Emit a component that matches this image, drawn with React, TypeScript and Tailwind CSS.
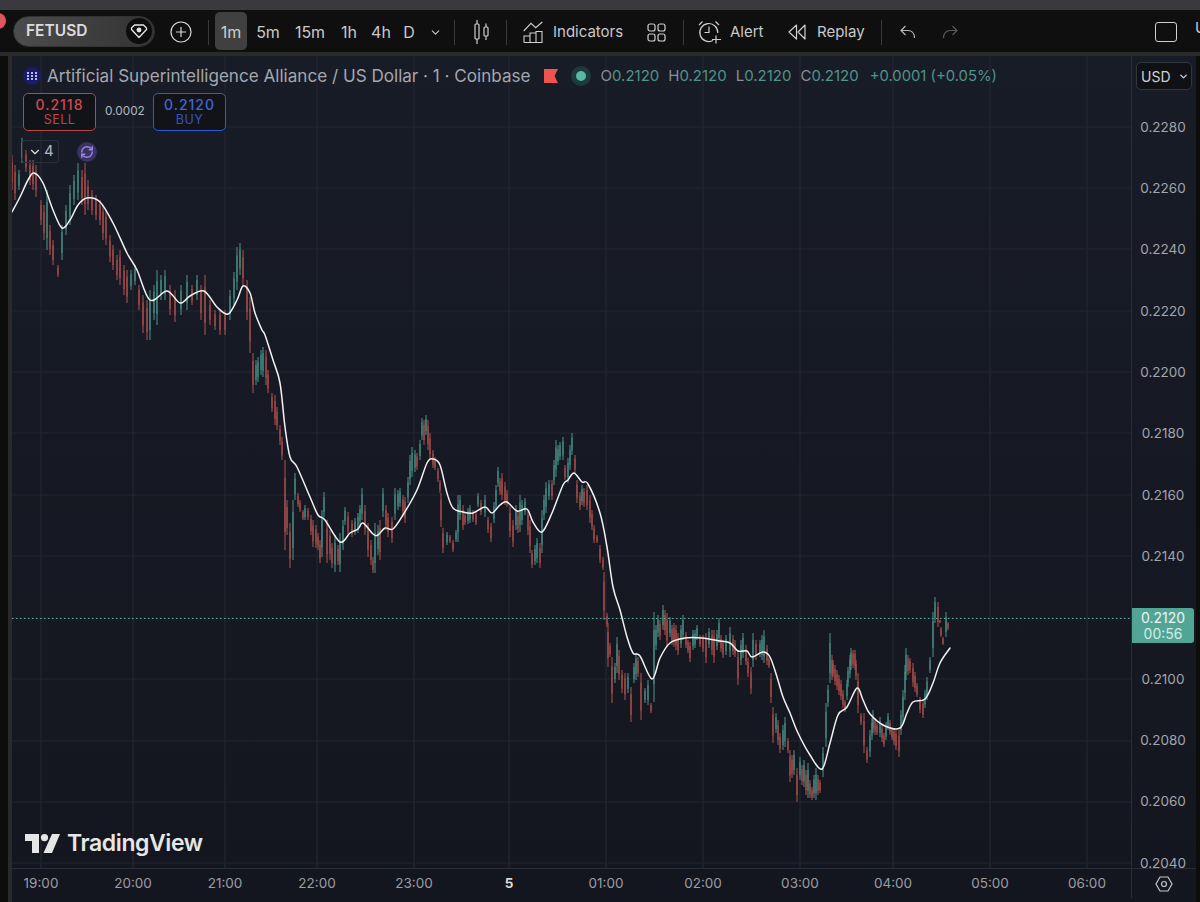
import React from 'react';
import { ChevronDown, RefreshCw } from 'lucide-react';

// traced by hand from the chart: [x, high, low] in page pixels
const CANDLES: number[][] = [
  [12,155,190],[15,165,200],[19,170,190],[22,138,163],[26,150,172],[30,160,185],[33,160,190],[36,165,197],[41,200,225],[44,205,240],[47,190,250],[50,225,255],[53,240,265],[58,265,277],
  [62,225,260],[66,205,235],[70,185,225],[74,175,205],[78,163,200],[82,170,205],[85,163,215],[88,180,210],[92,190,215],[96,195,220],[100,200,225],[103,205,240],[106,210,245],[110,235,262],[113,245,270],
  [117,255,280],[120,250,285],[124,265,295],[127,270,303],[131,270,290],[135,265,285],[139,285,310],[143,295,333],[147,300,340],[150,290,340],[154,285,320],[157,270,325],[161,275,300],[165,270,300],[170,285,315],[175,290,322],
  [181,285,315],[187,275,310],[192,285,305],[197,275,300],[201,285,320],[205,275,335],[210,300,325],[215,310,330],[220,310,335],[225,310,335],[230,290,320],[234,272,305],
  [237,247,290],[240,243,275],[243,250,285],[247,280,320],[250,297,353],[253,353,393],[256,360,385],[258,357,382],[261,350,375],[263,347,377],[266,350,385],[268,370,393],[272,393,412],[275,395,425],[277,407,430],[280,425,445],[282,437,460],[285,460,550],[287,500,535],[290,523,568],[293,500,560],[295,473,500],[298,493,507],[300,500,512],
  [303,510,520],[305,505,520],[308,508,520],[311,515,535],[313,520,547],[316,525,548],[318,533,550],[320,540,563],[322,510,557],[324,492,517],[327,520,563],[330,530,560],[332,543,568],[335,535,572],[338,545,565],[340,533,572],[343,520,550],[345,507,525],[348,512,535],[352,520,537],[355,518,535],[358,513,533],[360,505,525],[362,488,520],[365,505,535],[368,523,557],[371,540,565],[373,557,573],[375,523,573],[378,525,555],[380,520,560],[383,488,517],[386,505,530],[388,513,537],[392,517,543],[395,488,520],[398,490,510],[400,488,507],[403,495,515],[405,497,523],[408,477,503],[410,455,485],[412,447,477],[415,450,472],[417,453,470],[420,440,460],[422,418,440],[424,420,445],[426,415,435],[428,420,450],[430,433,460],[433,450,468],[435,457,470],[438,468,482],[440,480,493],[441,493,527],[443,528,553],
  [447,532,545],[450,535,543],[453,540,552],[456,530,542],[458,495,542],[460,495,520],[463,505,530],[465,513,525],[468,508,524],[470,505,523],[473,510,522],[476,512,525],[478,493,507],[481,500,515],[485,495,517],[488,517,533],[491,523,542],[494,502,523],[496,485,510],[498,467,487],[500,478,495],[502,473,500],[505,482,505],[507,490,507],[510,507,537],[513,520,547],[516,505,530],[518,512,533],[520,495,532],[522,500,525],[525,498,515],[528,510,535],[530,520,553],[532,550,568],[535,545,565],[537,538,563],[540,543,568],[542,510,553],[544,495,520],[546,482,513],[549,480,500],[552,480,500],[554,460,485],[556,440,477],[558,445,465],[560,442,460],[563,437,460],[565,465,480],[568,458,483],[570,445,470],[572,433,455],[575,455,473],[577,480,503],[580,492,510],[582,485,505],[584,488,507],[587,485,510],[590,495,523],[592,510,530],[594,525,543],[597,535,543],[600,545,563],[603,557,570],[604,572,620],[607,613,627],[608,623,667],[610,643,657],[612,657,703],[615,663,683],[617,637,673],[619,650,680],[622,670,693],[625,673,700],[628,673,693],[631,687,722],[634,663,683],[636,653,680],[638,657,677],[641,673,720],[645,688,703],[648,680,705],[651,703,713],
  [654,612,702],[656,625,650],[658,615,637],[660,620,640],[663,605,630],[665,610,635],[667,613,647],[670,617,637],[672,625,645],[674,623,647],[676,625,650],[678,633,655],[681,625,648],[683,615,640],[686,632,648],[688,640,653],[690,642,662],[693,630,650],[695,630,648],[697,625,640],[700,635,647],[703,635,652],[706,633,663],[709,628,648],[712,630,655],[714,630,663],[717,630,650],[719,618,643],[721,635,652],[723,640,658],[726,635,655],[730,627,657],[733,635,655],[735,640,657],[738,650,685],[741,640,665],[743,633,658],[746,645,665],[748,658,677],[751,667,694],[753,633,667],[756,640,660],[760,640,657],[762,635,660],[764,630,663],[767,645,665],[769,657,668],[771,673,703],[773,707,743],[776,713,733],[778,720,745],[780,733,753],[783,725,750],[785,717,747],[788,738,753],[790,750,782],[792,755,778],[794,750,775],[797,768,802],[800,757,780],[802,765,785],[804,760,787],[806,770,795],[808,763,798],[810,780,798],[812,787,800],[814,775,798],[816,768,800],[818,775,795],[820,780,793],[823,747,777],[826,703,747],[828,685,707],[830,633,683],[832,655,680],[833,660,677],[835,665,685],[837,670,690],[839,675,695],[841,680,700],[843,690,708],[845,700,712],[847,680,700],[848,667,687],[850,655,678],[851,648,670],[853,650,668],[855,650,670],[856,660,680],[858,673,713],[861,713,725],[864,713,753],[867,747,763],[870,730,757],[872,718,740],[873,710,733],[875,718,735],[877,723,735],[880,717,737],[882,725,742],[884,733,747],[886,722,740],[888,713,730],[890,720,735],[892,727,740],[894,728,745],[896,730,750],[899,730,757],[901,710,735],[903,690,723],[905,665,700],[906,648,680],[908,655,675],[910,658,673],[913,663,687],[915,672,692],[917,683,697],[920,697,713],[923,700,718],[925,690,708],[927,677,700],[930,657,673],[933,612,657],[935,597,623],[938,602,627],[940,620,623],[941,627,637],[943,637,645],[946,612,637],[948,622,630],
];

// white moving average line
const MA = [
  [12,212],[20,197],[28,180],[34,173],[43,183],[53,210],[62,228],[70,220],[78,205],[87,198],[100,202],[113,223],[127,253],[137,270],[150,300],[167,291],[180,303],[190,296],[204,291],[217,307],[228,314],[237,300],[243,286],[250,293],[255,313],[262,330],[265,335],[273,360],[280,383],[285,427],[290,457],[297,467],[310,497],[318,515],[325,520],[340,542],[350,533],[358,529],[363,523],[373,534],[378,535],[385,528],[393,529],[403,515],[417,490],[427,463],[433,459],[440,465],[447,493],[453,508],[463,512],[473,513],[485,507],[492,513],[500,505],[507,502],[517,511],[527,509],[533,522],[542,532],[552,513],[563,485],[568,480],[574,473],[582,482],[588,484],[600,513],[607,547],[613,587],[620,610],[627,637],[633,653],[640,656],[652,679],[660,658],[670,643],[685,638],[702,638],[720,641],[730,643],[738,651],[747,651],[752,657],[763,652],[770,657],[777,677],[783,697],[790,713],[798,733],[810,755],[822,769],[830,743],[838,715],[847,707],[857,688],[863,700],[870,714],[885,726],[900,728],[907,713],[913,702],[925,699],[933,683],[940,663],[950,648],
];

// catmull-rom through the traced points so the line doesn't look angular
function smoothPath(pts: number[][]) {
  let d = `M${pts[0][0]} ${pts[0][1]}`;
  for (let i = 0; i < pts.length - 1; i++) {
    const p0 = pts[Math.max(i - 1, 0)];
    const p1 = pts[i];
    const p2 = pts[i + 1];
    const p3 = pts[Math.min(i + 2, pts.length - 1)];
    const c1x = p1[0] + (p2[0] - p0[0]) / 6;
    const c1y = p1[1] + (p2[1] - p0[1]) / 6;
    const c2x = p2[0] - (p3[0] - p1[0]) / 6;
    const c2y = p2[1] - (p3[1] - p1[1]) / 6;
    d += ` C${c1x} ${c1y} ${c2x} ${c2y} ${p2[0]} ${p2[1]}`;
  }
  return d;
}

const GRID_X = [41, 133, 225, 317, 414, 509, 606, 703, 800, 893, 990, 1087];
const GRID_Y = [127, 188, 249, 311, 372, 433, 495, 556, 618, 679, 741, 802, 863];

const TICKS = [
  { x: 41, label: '19:00' },
  { x: 133, label: '20:00' },
  { x: 225, label: '21:00' },
  { x: 317, label: '22:00' },
  { x: 414, label: '23:00' },
  { x: 509, label: '5', bold: true },
  { x: 606, label: '01:00' },
  { x: 703, label: '02:00' },
  { x: 800, label: '03:00' },
  { x: 893, label: '04:00' },
  { x: 990, label: '05:00' },
  { x: 1087, label: '06:00' },
];

const PRICES_TOP = ['0.2280', '0.2260', '0.2240', '0.2220', '0.2200', '0.2180', '0.2160', '0.2140'];
const PRICES_BOTTOM = ['0.2100', '0.2080', '0.2060', '0.2040'];

function Chart() {
  return (
    <svg className="absolute inset-0 h-full w-full" viewBox="12 56 1119 812">
      {GRID_X.map((x) => (
        <line key={x} x1={x} x2={x} y1={56} y2={868} stroke="#262934" strokeWidth="1" />
      ))}
      {GRID_Y.map((y) => (
        <line key={y} x1={12} x2={1131} y1={y} y2={y} stroke="#232631" strokeWidth="1" />
      ))}
      {CANDLES.map(([x, hi, lo], i) => {
        const prev = CANDLES[Math.max(i - 1, 0)];
        const up = hi + lo < prev[1] + prev[2];
        const color = up ? '#4a968b' : '#b5524f';
        const inset = (lo - hi) * 0.2;
        return (
          <g key={x} stroke={color}>
            <line x1={x} x2={x} y1={hi} y2={lo} strokeWidth="1" />
            <line x1={x} x2={x} y1={hi + inset} y2={lo - inset} strokeWidth="1.6" strokeOpacity="0.6" />
          </g>
        );
      })}
      <line x1={12} x2={1131} y1={618.5} y2={618.5} stroke="#5fae9f" strokeWidth="1" strokeDasharray="1.5 2.5" />
      <path d={smoothPath(MA)} fill="none" stroke="#f2f2f2" strokeWidth="1.5" strokeLinecap="round" />
    </svg>
  );
}

function Sep({ className }: { className: string }) {
  return <div className={`h-[25px] w-px shrink-0 bg-[#3a3a3a] ${className}`} />;
}

function Legend() {
  return (
    <div className="absolute inset-x-0 top-0 flex flex-col">
      <div className="mt-[9px] flex h-[22px] items-center whitespace-nowrap text-[17.1px] text-[#a5a7af]">
        <span className="ml-[11px] grid h-[18px] w-[18px] grid-cols-3 content-center justify-items-center gap-[1px] rounded-full bg-[#1b1b6b] px-[4px]">
          {[0, 1, 2, 3, 4, 5, 6, 7, 8].map((n) => (
            <i key={n} className="h-[2px] w-[2px] bg-[#b9bcf0]" />
          ))}
        </span>
        <span className="ml-[6px]">Artificial Superintelligence Alliance / US Dollar · 1 · Coinbase</span>
        <svg className="ml-[13px]" width="14" height="14" viewBox="0 0 14 14">
          <path d="M0 0H14L10.5 7L14 14H0Z" fill="#ef5350" />
        </svg>
        <span className="ml-[13px] flex h-[20px] w-[20px] items-center justify-center rounded-full bg-[#1f3a3c]">
          <i className="h-[10px] w-[10px] rounded-full bg-[#57b8a4]" />
        </span>
        <span className="ml-[10px] flex gap-[9px] text-[15px] text-[#8b8e97]">
          <span>O<b className="font-normal text-[#4f9489]">0.2120</b></span>
          <span>H<b className="font-normal text-[#4f9489]">0.2120</b></span>
          <span>L<b className="font-normal text-[#4f9489]">0.2120</b></span>
          <span>C<b className="font-normal text-[#4f9489]">0.2120</b></span>
          <span className="ml-[2px] text-[14.8px] text-[#4f9489]">+0.0001 (+0.05%)</span>
        </span>
      </div>

      <div className="mt-[6px] ml-[11px] flex items-center">
        <div className="flex h-[38px] w-[73px] flex-col items-center justify-center rounded-[5px] border border-[#b5474a] bg-[#121318] leading-[15px]">
          <span className="text-[14px] font-medium tracking-[1px] text-[#d2494f]">0.2118</span>
          <span className="text-[12.5px] tracking-[0.5px] text-[#b8474a]">SELL</span>
        </div>
        <span className="ml-[9px] w-[48px] text-[11.8px] text-[#b6b8be]">0.0002</span>
        <div className="flex h-[38px] w-[73px] flex-col items-center justify-center rounded-[5px] border border-[#2f5bd0] bg-[#121318] leading-[15px]">
          <span className="text-[14px] font-medium tracking-[1px] text-[#3f66d6]">0.2120</span>
          <span className="text-[12.5px] tracking-[0.5px] text-[#3455bb]">BUY</span>
        </div>
      </div>

      <div className="mt-[9px] ml-[10px] flex items-center">
        <div className="flex h-[23px] w-[37px] items-center gap-[2px] rounded-[3px] border border-[#2c2f38] pl-[5px] text-[15px] text-[#b4b6bc]">
          <ChevronDown size={14} strokeWidth={2} className="text-[#e0e0e0]" />
          <span>4</span>
        </div>
        <span className="ml-[18px] flex h-[20px] w-[20px] items-center justify-center rounded-full bg-[#3a3360]">
          <RefreshCw size={14} strokeWidth={2.5} className="text-[#9d82e6]" />
        </span>
      </div>
    </div>
  );
}

function TvLogo() {
  return (
    <div className="absolute bottom-[13px] left-[13px] flex items-center">
      <svg width="35" height="19" viewBox="0 0 35 19" fill="#e6e6e6">
        <path d="M0 0H14V19H7V7H0Z" />
        <circle cx="19.5" cy="3.6" r="3.6" />
        <path d="M27 0H35L27 19H18.5Z" />
      </svg>
      <span className="ml-[7px] text-[23px] font-semibold leading-none tracking-[-0.4px] text-[#e6e6e6]">TradingView</span>
    </div>
  );
}

function Toolbar() {
  return (
    <div className="flex h-[42px] shrink-0 items-center overflow-hidden bg-[#0f0f0f] pt-[2px] text-[15px] text-[#c9c9c9]">
      <div className="-mt-[2px] ml-[13px] flex h-[31px] w-[142px] shrink-0 items-center justify-between rounded-full border border-[#333] bg-linear-to-r from-[#4c4c4c] to-[#333] pl-[12px] pr-[2px]">
        <span className="text-[15.5px] font-semibold text-[#dcdcdc]">FETUSD</span>
        <span className="flex h-[26px] w-[26px] items-center justify-center rounded-full bg-[#0d0d0d]">
          <svg width="18" height="18" viewBox="0 0 18 18" fill="none" stroke="#e6e6e6" strokeWidth="1.3" strokeLinejoin="round">
            <path d="M1.5 6 4.5 3H13.5L16.5 6V7.5L9 15.5 1.5 7.5Z" />
            <circle cx="9" cy="8" r="1.8" fill="#e6e6e6" />
          </svg>
        </span>
      </div>

      <svg className="ml-[15px] shrink-0" width="22" height="22" viewBox="0 0 22 22" fill="none" stroke="#d8d8d8" strokeWidth="1.2">
        <circle cx="11" cy="11" r="10" />
        <path d="M6 11H16M11 6V16" />
      </svg>
      <Sep className="ml-[16px]" />

      <div className="-mt-[2px] ml-[6px] flex h-[38px] w-[32px] shrink-0 items-center justify-center rounded-[5px] bg-[#404040] pt-[2px] text-[16px] text-[#cfcfcf]">1m</div>
      <span className="ml-[9px] w-[24px] shrink-0 text-center text-[16px]">5m</span>
      <span className="ml-[14px] w-[32px] shrink-0 text-center text-[16px]">15m</span>
      <span className="ml-[13px] w-[20px] shrink-0 text-center text-[16px]">1h</span>
      <span className="ml-[12px] w-[20px] shrink-0 text-center text-[16px]">4h</span>
      <span className="ml-[12px] w-[12px] shrink-0 text-center text-[16px]">D</span>
      <ChevronDown className="ml-[13.5px] shrink-0" size={13} strokeWidth={2} />
      <Sep className="ml-[12.5px]" />

      <svg className="ml-[17px] shrink-0" width="18" height="24" viewBox="0 0 18 24" fill="none" stroke="#d0d0d0" strokeWidth="1.2">
        <rect x="3" y="4" width="4" height="15" rx="1" />
        <path d="M5 0V4M5 19V24" />
        <rect x="12" y="7" width="4" height="9" rx="1" />
        <path d="M14 3.5V7M14 16V20" />
      </svg>
      <Sep className="ml-[16px]" />

      <svg className="ml-[16px] shrink-0" width="20" height="22" viewBox="0 0 20 22" fill="none" stroke="#d0d0d0" strokeWidth="1.1">
        <path d="M1 21.5H19V10.5H13V21.5M13 12H7V21.5M7 15H1V21.5" />
        <path d="M0.7 10 8 2.3 12.7 6.7 19.3 1" />
      </svg>
      <span className="ml-[10px] w-[71px] shrink-0">Indicators</span>

      <svg className="ml-[22.5px] shrink-0" width="19" height="19" viewBox="0 0 19 19" fill="none" stroke="#d0d0d0" strokeWidth="1.2">
        <rect x="1" y="1" width="7" height="7" rx="2" />
        <rect x="11" y="1" width="7" height="7" rx="2" />
        <rect x="1" y="11" width="7" height="7" rx="2" />
        <rect x="11" y="11" width="7" height="7" rx="2" />
      </svg>
      <Sep className="ml-[17.5px]" />

      <svg className="ml-[14px] shrink-0" width="24" height="24" viewBox="0 0 24 24" fill="none" stroke="#d0d0d0" strokeWidth="1.2">
        <path d="M15 20.5A9 9 0 1 1 19.8 13" />
        <path d="M11 6.5V12.5H6.5M1 5 4.5 1.5M21 5 17.5 1.5M18 15.5V23.5M14 19.5H23" />
      </svg>
      <span className="ml-[8px] w-[34px] shrink-0">Alert</span>

      <svg className="ml-[24px] shrink-0" width="18" height="16" viewBox="0 0 18 16" fill="none" stroke="#d0d0d0" strokeWidth="1.2" strokeLinejoin="round">
        <path d="M8.5 1 1 8 8.5 15ZM17 1 10 8 17 15Z" />
      </svg>
      <span className="ml-[11px] w-[48px] shrink-0">Replay</span>
      <Sep className="ml-[16px]" />

      <svg className="ml-[18px] shrink-0" width="16" height="14" viewBox="0 0 16 14" fill="none" stroke="#b8b8b8" strokeWidth="1.2">
        <path d="M5.5 1 1 5.5 5.5 10M1 5.5H8C11.5 5.5 14.5 8 14.5 13" />
      </svg>
      <svg className="ml-[26px] shrink-0" width="16" height="14" viewBox="0 0 16 14" fill="none" stroke="#5a5a5a" strokeWidth="1.2">
        <path d="M10.5 1 15 5.5 10.5 10M15 5.5H8C4.5 5.5 1.5 8 1.5 13" />
      </svg>

      <div className="ml-[197px] h-[20px] w-[22px] shrink-0 rounded-[3px] border border-[#d0d0d0]" />
      <span className="mb-[8px] ml-[18px] shrink-0">U</span>
    </div>
  );
}

function PriceAxis() {
  return (
    <div className="flex w-[65px] shrink-0 flex-col border-l border-[#2a2d37] text-[13.5px] text-[#a3a5ab]">
      <div className="mx-[4px] mt-[6px] flex h-[28px] shrink-0 items-center justify-between rounded-[5px] border border-[#33353d] bg-[#101114] pl-[4px] pr-[2px] text-[14px] text-[#d0d0d0]">
        USD
        <ChevronDown size={11} strokeWidth={3} />
      </div>
      <div className="mt-[6.3px] flex h-0 flex-col">
        {PRICES_TOP.map((p) => (
          <div key={p} className="flex h-[61.33px] shrink-0 items-center justify-center pr-[2px]">{p}</div>
        ))}
        <div className="h-[61.33px] shrink-0 pt-[21px]">
          <div className="flex h-[35px] w-[62px] flex-col items-center justify-center rounded-r-[3px] bg-[#50a595] pt-[1px] text-[14px] leading-[16px] text-[#f2f2f2]">
            <span>0.2120</span>
            <span className="text-[#d5ebe6]">00:56</span>
          </div>
        </div>
        {PRICES_BOTTOM.map((p) => (
          <div key={p} className="flex h-[61.33px] shrink-0 items-center justify-center pr-[2px]">{p}</div>
        ))}
      </div>
    </div>
  );
}

function TimeAxis() {
  return (
    <div className="flex h-[30px] shrink-0 border-t border-[#2a2d37] text-[13.5px] text-[#9b9da4]">
      <div className="flex flex-1 items-center">
        {TICKS.map((t, i) => (
          <div
            key={t.label}
            className="flex w-0 justify-center"
            style={{ marginLeft: t.x - (i === 0 ? 12 : TICKS[i - 1].x) }}
          >
            <span className={t.bold ? 'font-bold text-[#d8d8d8]' : ''}>{t.label}</span>
          </div>
        ))}
      </div>
      <div className="flex w-[65px] shrink-0 items-center justify-center border-l border-[#2a2d37]">
        <svg width="18" height="16" viewBox="0 0 18 16" fill="none" stroke="#c8c8c8" strokeWidth="1.2">
          <path d="M5 1H13L17 8 13 15H5L1 8Z" />
          <circle cx="9" cy="8" r="2.5" />
        </svg>
      </div>
    </div>
  );
}

export default function App() {
  return (
    <div className="relative flex h-[902px] w-[1200px] flex-col overflow-hidden bg-[#0d0d0d] font-['Inter',sans-serif]">
      <div className="h-[10px] shrink-0 bg-[#3a3a3e]" />
      <Toolbar />
      <div className="h-[4px] shrink-0 bg-[#2a2a2a]" />
      <div className="flex min-h-0 flex-1">
        <div className="w-[8px] shrink-0 bg-[#0d0d0b]" />
        <div className="w-[4px] shrink-0 bg-[#2a2a2a]" />
        <div className="flex w-[1184px] shrink-0 flex-col bg-linear-to-b from-[#181c27] to-[#14161f]">
          <div className="flex h-[812px] shrink-0">
            <div className="relative flex-1">
              <Chart />
              <Legend />
              <TvLogo />
            </div>
            <PriceAxis />
          </div>
          <TimeAxis />
        </div>
      </div>
      <div className="absolute left-[-10px] top-[13px] h-[16px] w-[16px] rounded-full bg-[#e0555a]" />
    </div>
  );
}
